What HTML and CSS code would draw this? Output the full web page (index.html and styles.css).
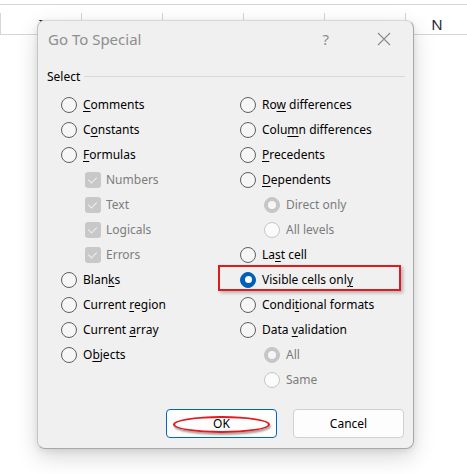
FILE: index.html
```html
<!DOCTYPE html>
<html lang="en">
<head>
  <meta charset="UTF-8">
  <meta name="viewport" content="width=device-width, initial-scale=1.0">
  <title>Go To Special</title>
  <link rel="stylesheet" href="styles.css">
</head>
<body>
  <!-- Cabecera de columnas de la hoja -->
  <div class="sheet-header">
    <div class="corner"></div>
    <div class="col">I</div>
    <div class="col">J</div>
    <div class="col">K</div>
    <div class="col">L</div>
    <div class="col">M</div>
    <div class="col">N</div>
  </div>

  <!-- Dialogo -->
  <div class="dialog">
    <div class="titlebar">
      <span class="title">Go To Special</span>
      <span class="help">?</span>
      <svg class="close" width="14" height="14" viewBox="0 0 14 14">
        <path d="M1 1 L13 13 M13 1 L1 13" stroke="#8a8a8a" stroke-width="1.1" fill="none"/>
      </svg>
    </div>

    <div class="group">
      <div class="legend"><span>Select</span><i class="rule"></i></div>

      <div class="options">
        <div class="column">
          <label class="row"><span class="radio"></span><span><u>C</u>omments</span></label>
          <label class="row"><span class="radio"></span><span>C<u>o</u>nstants</span></label>
          <label class="row"><span class="radio"></span><span><u>F</u>ormulas</span></label>
          <label class="row sub off"><span class="check"></span><span>Numbers</span></label>
          <label class="row sub off"><span class="check"></span><span>Text</span></label>
          <label class="row sub off"><span class="check"></span><span>Logicals</span></label>
          <label class="row sub off"><span class="check"></span><span>Errors</span></label>
          <label class="row"><span class="radio"></span><span>Blan<u>k</u>s</span></label>
          <label class="row"><span class="radio"></span><span>Current <u>r</u>egion</span></label>
          <label class="row"><span class="radio"></span><span>Current <u>a</u>rray</span></label>
          <label class="row"><span class="radio"></span><span>O<u>b</u>jects</span></label>
        </div>
        <div class="column">
          <label class="row"><span class="radio"></span><span>Ro<u>w</u> differences</span></label>
          <label class="row"><span class="radio"></span><span>Colu<u>m</u>n differences</span></label>
          <label class="row"><span class="radio"></span><span><u>P</u>recedents</span></label>
          <label class="row"><span class="radio"></span><span><u>D</u>ependents</span></label>
          <label class="row sub off"><span class="radio on"></span><span>Direct only</span></label>
          <label class="row sub off"><span class="radio"></span><span>All levels</span></label>
          <label class="row"><span class="radio"></span><span>La<u>s</u>t cell</span></label>
          <label class="row marked"><span class="radio on"></span><span>Visible cells onl<u>y</u></span><span class="mark-box"></span></label>
          <label class="row"><span class="radio"></span><span>Condi<u>t</u>ional formats</span></label>
          <label class="row"><span class="radio"></span><span>Data <u>v</u>alidation</span></label>
          <label class="row sub off"><span class="radio on"></span><span>All</span></label>
          <label class="row sub off"><span class="radio"></span><span>Same</span></label>
        </div>
      </div>
    </div>

    <div class="buttons">
      <button class="btn default">OK<span class="mark-ring"></span></button>
      <button class="btn">Cancel</button>
    </div>
  </div>
</body>
</html>
```

FILE: styles.css
```css
body {
  margin: 0;
  background: #ffffff;
  font-family: "Noto Sans", "Open Sans", sans-serif;
  font-size: 12px;
  color: #000000;
}

/* Cabecera de la hoja */
.sheet-header {
  display: flex;
  margin-top: 4px;
  height: 31px;
  border-top: 1px solid #d6d6d6;
  border-bottom: 1px solid #d6d6d6;
  box-sizing: border-box;
}

.corner {
  width: 8px;
}

.sheet-header .col {
  width: 80px;
  flex-shrink: 0;
  margin-top: 8px;
  border-left: 1px solid #d6d6d6;
  font-size: 15px;
  color: #1b2434;
  text-align: center;
  line-height: 22px;
}

.sheet-header .col:last-child {
  width: 60px;
  padding-left: 1px;
}

/* Dialogo */
.dialog {
  position: absolute;
  top: 20px;
  left: 37px;
  width: 377px;
  height: 429px;
  box-sizing: border-box;
  background: #f0f0f0;
  border: 1px solid #a8a8a8;
  border-top-color: #d8d8d8;
  border-left-color: #c4c4c4;
  border-radius: 8px;
  box-shadow: 0 8px 22px rgba(0, 0, 0, 0.16), 0 2px 6px rgba(0, 0, 0, 0.08);
  display: flex;
  flex-direction: column;
}

.titlebar {
  display: flex;
  align-items: center;
  height: 36px;
  padding: 0 0 3px 10px;
}

.title {
  font-size: 15px;
  color: #8e8e8e;
  flex: 1;
}

.help {
  font-size: 15px;
  color: #8e8e8e;
  margin-right: 48px;
}

.close {
  margin-right: 22px;
}

/* Grupo de opciones */
.group {
  padding: 8px 8px 0 9px;
}

.legend {
  display: flex;
  align-items: center;
  height: 16px;
}

.legend .rule {
  flex: 1;
  height: 1px;
  background: #d8d8d8;
  margin-left: 4px;
}

.options {
  display: grid;
  grid-template-columns: 179px 1fr;
  padding-left: 14px;
  margin-top: 8px;
}

.column {
  display: flex;
  flex-direction: column;
}

.row {
  display: flex;
  align-items: center;
  gap: 5px;
  height: 25px;
  white-space: nowrap;
}

.row u {
  text-decoration-thickness: 1px;
  text-underline-offset: 2px;
}

.row.sub {
  padding-left: 24px;
}

.row.off {
  color: #7c7c7c;
}

.radio {
  width: 16px;
  height: 16px;
  box-sizing: border-box;
  border: 1px solid #5f5f5f;
  border-radius: 50%;
  background: #f6f6f6;
  flex-shrink: 0;
  display: flex;
  align-items: center;
  justify-content: center;
  margin-right: 1px;
}

.radio.on {
  background: #005fb8;
  border-color: #005fb8;
}

.radio.on::after {
  content: "";
  width: 7px;
  height: 7px;
  border-radius: 50%;
  background: #ffffff;
}

.off .radio {
  border-color: #c6c6c6;
  background: #fbfbfb;
}

.off .radio.on {
  background: #c6c6c6;
}

.off .radio.on::after {
  width: 8px;
  height: 8px;
  background: #f6f6f6;
}

.check {
  width: 16px;
  height: 16px;
  border-radius: 3px;
  background: #c8c8c8;
  flex-shrink: 0;
  position: relative;
}

.check::after {
  content: "";
  position: absolute;
  left: 5px;
  top: 3px;
  width: 4px;
  height: 7px;
  border-right: 1px solid #f2f2f2;
  border-bottom: 1px solid #f2f2f2;
  transform: rotate(45deg);
}

/* Marca roja sobre la opcion elegida */
.row.marked {
  position: relative;
}

.mark-box {
  position: absolute;
  left: -22px;
  top: -2px;
  width: 183px;
  height: 26px;
  box-sizing: border-box;
  border: 2px solid #e3191c;
  box-shadow: 2px 2px 3px rgba(0, 0, 0, 0.25);
}

/* Botones */
.buttons {
  margin-top: auto;
  display: flex;
  justify-content: flex-end;
  gap: 16px;
  padding: 0 9px 10px 0;
}

.btn {
  position: relative;
  width: 111px;
  height: 29px;
  background: #fdfdfd;
  border: 1px solid #d0d0d0;
  border-radius: 4px;
  font-family: inherit;
  font-size: 12px;
  color: #000000;
  padding: 0;
}

.btn.default {
  border-color: #0067c0;
}

.mark-ring {
  position: absolute;
  left: 6px;
  top: 6px;
  width: 97px;
  height: 17px;
  box-sizing: border-box;
  border: 2px solid #e3191c;
  border-radius: 50%;
  box-shadow: 1px 2px 2px rgba(0, 0, 0, 0.35);
}
```
